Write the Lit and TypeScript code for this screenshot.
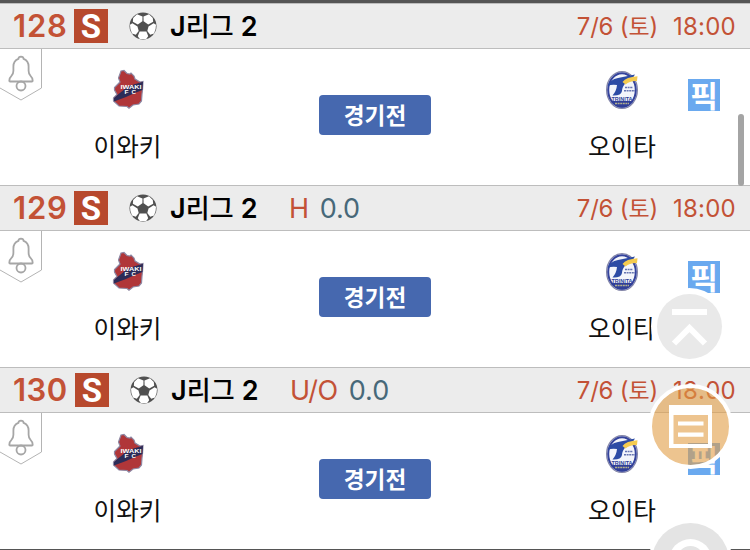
import { LitElement, html, css, svg, nothing } from "lit";
import { customElement, property } from "lit/decorators.js";

interface Match {
  no: string;
  kind?: string;
  line?: string;
}

const ball = html`<svg class="ball" viewBox="0 0 28 28">
  <circle cx="14" cy="14" r="13.5" fill="#505050" />
  <g fill="#fff">
    <path d="M8 2.200 13.500 4.400 13.400 9.200 8.800 12.400 3.800 9.800 4.200 6Z" />
    <path d="M20 2.200 14.500 4.400 14.600 9.200 19.200 12.400 24.200 9.800 23.800 6Z" />
    <path d="M1 12.800 3.400 11.200 8.500 14.400 9.700 19 6.800 22.800 3 21.600Q.8 17 1 12.800Z" />
    <path d="M27 12.800 24.600 11.200 19.500 14.400 18.300 19 21.200 22.800 25 21.600Q27.200 17 27 12.800Z" />
    <path d="M10.600 19.400 17.400 19.400 19.200 24.200 17.200 27 10.800 27 8.800 24.200Z" />
  </g>
</svg>`;

const bell = html`<svg class="bell" viewBox="0 0 43 53">
  <path d="M41.5 0V39L21 51 0 39" fill="#fff" stroke="#b4b4b4" />
  <g fill="none" stroke="#a6a6a6" stroke-width="1.8">
    <path d="M21 7.600q-2.400 0-2.600 2.300-5 1.900-5 7.600v4.200q0 3.500-2.100 5.400-2 1.800-2 4.600 0 .8.800.8h21.800q.8 0 .8-.8 0-2.800-2-4.600-2.100-1.900-2.100-5.400v-4.200q0-5.700-5-7.600-.2-2.300-2.600-2.300" />
    <circle cx="21" cy="37" r="4.500" />
  </g>
</svg>`;

const iwaki = html`<svg class="crest" viewBox="0 0 36 42">
  <path d="M11 2 14 1.5 17 4.5 20 5 21 4 24 7 25 10 30 13 33 12.500 32.500 21 32 25 31.500 32 29 35 23 36 19 39.200 17 37.500 9 37 3.5 32 3.5 29 7 25.5 4.5 21 4.500 18.500 10 13 8.500 9Z" fill="#b03639" stroke="#8d87a3" stroke-width="1.200" />
  <path d="M17 17.500 33 12.700 32.500 21 26 23.500 16 28 4 32.500 4 29 8 25.500 13 21.500Z" fill="#2c2c58" />
  <text x="10.500" y="20.200" font-size="4.600" textLength="21" lengthAdjust="spacingAndGlyphs">IWAKI</text>
  <text x="14.500" y="25.400" font-size="5" textLength="4" lengthAdjust="spacingAndGlyphs">F</text>
  <text x="21.500" y="25.400" font-size="5" textLength="4.500" lengthAdjust="spacingAndGlyphs">C</text>
</svg>`;

const trinita = html`<svg class="crest" viewBox="0 0 36 42">
  <ellipse cx="18" cy="21" rx="15.400" ry="18.400" fill="#fff" stroke="#8385a8" stroke-width="1.200" />
  <ellipse cx="18" cy="21" rx="13.800" ry="16.800" fill="#f3f5fb" stroke="#34439c" stroke-width="2" />
  <path d="M7 33Q18 44 29 33L28.700 32H7.300Z" fill="#303f98" />
  <path d="M3.500 17Q6 10.500 14 9L31 5.500 27 11.500 22 13.500Q18 18 18 22 17 27 8.500 26.500 12.500 22 13 16 8 15 3.500 17Z" fill="#2c4ba5" />
  <path d="M18.500 13Q22 8 33.500 7.200L33 12Q26 11.500 21.500 15.500Z" fill="#f4cb50" />
  <path d="M21 18.500h8M20 21.800h11" stroke="#6675b2" stroke-width="1.600" stroke-dasharray="2 .6" />
  <text class="navy" x="7.500" y="31.600" font-size="6" textLength="21" lengthAdjust="spacingAndGlyphs">TRINITA</text>
  <path d="M11 34.500h14" stroke="#b3b08e" stroke-width="1.600" stroke-dasharray="2 .6" />
</svg>`;

@customElement("match-row")
export class MatchRow extends LitElement {
  @property({ attribute: false }) match!: Match;

  static styles = css`
    :host { display: block; height: 182px; box-sizing: border-box; border-top: 1px solid #bdbdbd; }
    .head {
      display: flex; align-items: center; height: 44px; padding: 0 14px 0 13px;
      background: #ececec; border-bottom: 1px solid #bdbdbd; white-space: pre;
    }
    .no { width: 61px; flex: none; font-size: 31px; line-height: 44px; font-weight: 600; color: #c35236; letter-spacing: 0.8px; }
    .third .no { width: 62px; letter-spacing: 0.4px; }
    .sport {
      width: 34px; height: 34px; background: #b7492d; color: #fff; text-align: center;
      font: 700 33px/35px Roboto, sans-serif;
    }
    .ball { width: 28px; height: 28px; margin: 0 13px 0 21px; }
    .league { width: 119px; font-size: 27px; line-height: 40px; font-weight: 600; color: #000; margin-top: 2px; letter-spacing: 0.1px; }
    .kr { font-family: "Noto Sans CJK KR", sans-serif; font-weight: 500; line-height: 1; }
    .league .kr { font-size: 26px; }
    .kind { font-size: 27px; color: #c35236; margin-right: 11px; letter-spacing: -0.4px; padding-top: 1px; }
    .line { font-size: 27px; color: #476879; padding-top: 1px; }
    .when {
      margin-left: auto; display: flex; align-items: baseline; gap: 15px;
      font-size: 24px; line-height: 40px; color: #c35236; padding-top: 2px;
    }
    .when .kr { font-weight: 400; font-size: 23px; }
    .date { letter-spacing: -0.2px; }
    .time { letter-spacing: 0.25px; }
    .body { display: flex; height: 136px; background: #fff; }
    .bell { width: 43px; height: 53px; flex: none; }
    .team { width: 169px; display: flex; flex-direction: column; align-items: center; padding-top: 20px; box-sizing: border-box; }
    .crest { width: 36px; height: 42px; }
    .crest text { font-family: "Liberation Sans", sans-serif; font-weight: 700; fill: #fff; }
    .crest .navy { fill: #303f98; }
    .name { font: 400 24.6px/36px "Noto Sans CJK KR", sans-serif; margin-top: 16px; color: #111; }
    .state {
      width: 112px; height: 40px; margin: 46px 106px 0 107px; border-radius: 4px; background: #4668af;
      color: #fff; font: 700 22.6px/39px "Noto Sans CJK KR", sans-serif; text-align: center;
    }
    .away { width: 130px; margin-left: 20px; }
    .pick {
      width: 32px; height: 32px; margin: 30px 0 0 1px; background: #6aa9ef; color: #fff;
      font: 700 30px/31px "Noto Sans CJK KR", sans-serif; text-align: center;
    }
  `;

  render() {
    const m = this.match;
    return html`
      <div class="head ${m.no === "130" ? "third" : ""}">
        <span class="no">${m.no}</span><span class="sport">S</span>${ball}
        <span class="league">J<span class="kr">리그</span> 2</span>
        ${m.kind ? html`<span class="kind">${m.kind}</span><span class="line">${m.line}</span>` : nothing}
        <span class="when"><span class="date">7/6 (<span class="kr">토</span>)</span><span class="time">18:00</span></span>
      </div>
      <div class="body">
        ${bell}
        <div class="team">${iwaki}<span class="name">이와키</span></div>
        <div class="state">경기전</div>
        <div class="team away">${trinita}<span class="name">오이타</span></div>
        <div class="pick">픽</div>
      </div>
    `;
  }
}

@customElement("app-root")
export class AppRoot extends LitElement {
  static styles = css`
    :host {
      display: block; position: relative; width: 750px; height: 550px; overflow: hidden;
      background: #555; font-family: Inter, "Noto Sans CJK KR", sans-serif;
    }
    .list { padding-top: 3px; }
    .scroll { position: absolute; left: 738px; top: 114px; width: 6px; height: 72px; border-radius: 3px; background: #a4a4a4; }
    .float { position: absolute; left: 640px; top: 280px; width: 110px; height: 270px; }
  `;

  matches: Match[] = [
    { no: "128" },
    { no: "129", kind: "H", line: "0.0" },
    { no: "130", kind: "U/O", line: "0.0" },
  ];

  render() {
    return html`
      <div class="list">${this.matches.map((m) => html`<match-row .match=${m}></match-row>`)}</div>
      <div class="scroll"></div>
      <svg class="float" viewBox="640 280 110 270">
        ${svg`
        <circle cx="689.5" cy="326.500" r="38.500" fill="#fff" />
        <circle cx="689.500" cy="326.500" r="32.500" fill="#e9e9e9" />
        <path d="M672 312h35M674 343.500 689.500 328 705 343.500" fill="none" stroke="#fff" stroke-width="6" />
        <circle cx="690.500" cy="426.500" r="40.300" fill="#e19d44" fill-opacity=".6" />
        <circle cx="690.500" cy="426.500" r="40.500" fill="none" stroke="#fff" stroke-width="4" />
        <path fill="#fff" fill-rule="evenodd" d="M669 405h43v43h-43ZM673.500 415v29h34.500v-29Z" />
        <path d="M678 423.500h25.500M678 434.700h25.500" stroke="#fff" stroke-width="4.200" />
        <circle cx="690.500" cy="561.600" r="42" fill="#fff" />
        <circle cx="690.500" cy="561.600" r="38.600" fill="#e4e4e4" />
        <circle cx="690.500" cy="560.500" r="21.500" fill="#fff" />
        <circle cx="690.500" cy="559.500" r="13.500" fill="#e4e4e4" />`}
      </svg>
    `;
  }
}
